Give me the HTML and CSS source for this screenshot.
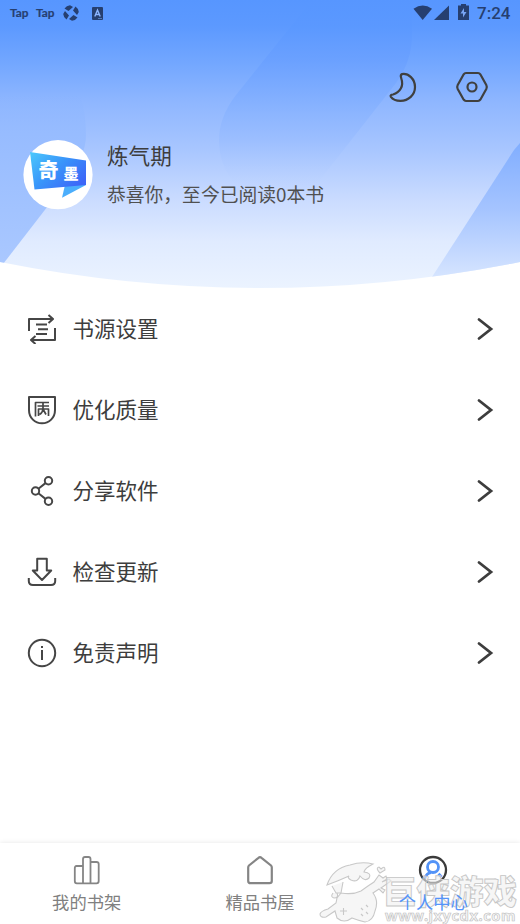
FILE: index.html
```html
<!DOCTYPE html>
<html lang="zh-CN">
<head>
<meta charset="utf-8">
<title>个人中心</title>
<link rel="stylesheet" href="styles.css">
</head>
<body>
<div class="app">
  <header class="hero">
    <svg class="hero-bg" viewBox="0 0 520 290" aria-hidden="true">
      <defs>
        <linearGradient id="sky" gradientUnits="userSpaceOnUse" x1="0" y1="0" x2="0" y2="288">
          <stop offset="0" stop-color="#5796ff"/><stop offset=".09" stop-color="#5c99ff"/><stop offset=".22" stop-color="#73a7ff"/><stop offset=".35" stop-color="#8eb6ff"/><stop offset=".52" stop-color="#a8c6ff"/><stop offset=".7" stop-color="#cbdcff"/><stop offset=".84" stop-color="#e0ebff"/><stop offset="1" stop-color="#ebf3ff"/>
        </linearGradient>
        <linearGradient id="mid" gradientUnits="userSpaceOnUse" x1="0" y1="0" x2="0" y2="185">
          <stop offset="0" stop-color="#5796ff"/><stop offset=".14" stop-color="#5a98ff"/><stop offset=".33" stop-color="#699fff"/><stop offset=".54" stop-color="#80aeff"/><stop offset=".76" stop-color="#9abdff"/><stop offset="1" stop-color="#b8d0ff" stop-opacity="0"/>
        </linearGradient>
        <linearGradient id="left" gradientUnits="userSpaceOnUse" x1="0" y1="90" x2="0" y2="265">
          <stop offset="0" stop-color="#87b2ff" stop-opacity="0"/><stop offset=".25" stop-color="#97bcff"/><stop offset="1" stop-color="#aac8ff"/>
        </linearGradient>
        <linearGradient id="right" gradientUnits="userSpaceOnUse" x1="0" y1="143" x2="0" y2="276">
          <stop offset="0" stop-color="#81aeff"/><stop offset=".5" stop-color="#a5c4ff"/><stop offset="1" stop-color="#d5e4ff"/>
        </linearGradient>
        <clipPath id="bowl"><path d="M0 0H520V262Q260 314 0 262Z"/></clipPath>
      </defs>
      <g clip-path="url(#bowl)">
        <path fill="url(#sky)" d="M0 0H520V290H0Z"/>
        <path fill="url(#mid)" opacity=".75" d="M312 0L236 95Q219 117 219 140Q219 166 236 185H316L396 83Q412 61 412 35V0Z"/>
        <path fill="url(#left)" d="M0 90H78Q86 108 86 135Q86 155 68 180L0 268Z"/>
        <path fill="url(#right)" d="M520 143L514 150L432 277L520 290Z"/>
      </g>
    </svg>
    <div class="status">
      <span class="tap">Tap</span><span class="tap">Tap</span>
      <svg class="spin" width="16" height="16" viewBox="0 0 16 16"><path fill="#263f70" d="M7 .2Q3.500.5 1.500 3.500L5.500 6L10 2ZM15.800 7Q15.500 3.500 12.500 1.500L10 5.500L14 10ZM9 15.800Q12.500 15.500 14.500 12.500L10.500 10L6 14ZM.2 9Q.5 12.500 3.500 14.500L6 10.500L2 6Z"/></svg>
      <svg class="abox" width="11" height="13" viewBox="0 0 11 13"><rect width="11" height="13" rx="1" fill="#263f70"/><path d="M2.800 9.500L5.500 3L8.200 9.500M4 7.500H7" fill="none" stroke="#8bb5ff" stroke-width="1.400"/><path d="M6 11.500H10" stroke="#6694dd" stroke-width=".7"/></svg>
      <svg class="signals" width="60" height="18" viewBox="0 0 60 18" fill="#263f70"><path d="M.5 4.800Q9.700-1.800 19 4.800L9.700 16Z"/><path d="M21 16L36 1.500V16Z"/><path d="M48 0H53V1.600H56V16H45V1.600H48Z"/><path fill="#78a5f5" d="M51 4L47.500 9.500H50V13.500L53.500 8H51Z"/></svg>
      <time class="time">7:24</time>
    </div>
    <div class="tools">
      <svg width="30" height="32" viewBox="0 0 30 32" class="line"><path d="M14 3.100C20.500 2 27 8 27 16C27 24 20.500 29.800 12.500 29.800C8.500 29.800 4.500 28 2.900 25.800C2 24.400 3 23.700 5 23.500C12 21.500 16 15 13.300 7.500C12.600 5.500 12.400 3.700 14 3.100Z"/></svg>
      <svg width="34" height="32" viewBox="0 0 34 32" class="line"><path d="M11 2H23Q24.500 2 25.300 3.300L31.300 14Q32.300 16 31.300 18L25.300 28.700Q24.500 30 23 30H11Q9.500 30 8.700 28.700L2.700 18Q1.700 16 2.700 14L8.700 3.300Q9.500 2 11 2Z"/><circle cx="17" cy="16" r="4.500"/></svg>
    </div>
    <div class="profile">
      <svg class="avatar" width="70" height="70" viewBox="0 0 70 70">
        <defs><linearGradient id="logo" x1="0" y1="0" x2="1" y2=".7"><stop stop-color="#4cc9fc"/><stop offset=".5" stop-color="#3996fa"/><stop offset="1" stop-color="#3d67f8"/></linearGradient></defs>
        <circle cx="35" cy="34.700" r="34.600" fill="#fff"/>
        <path fill="#4baefc" d="M42 45L39 57.700L63 45Z"/><path fill="url(#logo)" d="M7 12L63 20.500V45L11.500 49.500Z"/>
        <text x="15.500" y="38" class="logo-big">奇</text><text x="40.500" y="38.500" class="logo-small">墨</text>
      </svg>
      <div class="who"><div class="rank">炼气期</div><div class="count">恭喜你，至今已阅读0本书</div></div>
    </div>
  </header>

  <main class="menu">
    <a class="row"><svg class="icon" viewBox="0 0 30 30"><path d="M2 17V5H25M21.500 1L26 5L21.500 9M28 14V26H5M8.500 22L4 26L8.500 30M9 10.500H20M11 15.200H21M9 20H20" /></svg><span>书源设置</span><svg class="chev" viewBox="0 0 18 24"><path d="M3 2.500L15 12L3 21.500"/></svg></a>
    <a class="row"><svg class="icon" viewBox="0 0 30 30"><path d="M2 2H28V15C28 23 22 28.300 15 28.300S2 23 2 15Z"/><path class="fine" d="M8.500 21.500V7.500H22M10.500 11H22M11.500 21V14H21.500V21M16 8V14Q15.500 18 12.500 19.500M16.500 15L19 19.500"/></svg><span>优化质量</span><svg class="chev" viewBox="0 0 18 24"><path d="M3 2.500L15 12L3 21.500"/></svg></a>
    <a class="row"><svg class="icon" viewBox="0 0 30 30"><circle cx="8.500" cy="15" r="3.700"/><circle cx="21.500" cy="4.800" r="3.700"/><circle cx="21.500" cy="25.200" r="3.700"/><path d="M11.400 12.700L18.500 7.100M11.400 17.300L18.500 22.900"/></svg><span>分享软件</span><svg class="chev" viewBox="0 0 18 24"><path d="M3 2.500L15 12L3 21.500"/></svg></a>
    <a class="row"><svg class="icon" viewBox="0 0 30 30"><path d="M10.200 1.800H19.800V13.500H24.200L15 23L5.800 13.500H10.200ZM1.800 21V24Q1.800 28 6 28H24Q28.200 28 28.200 24V21"/></svg><span>检查更新</span><svg class="chev" viewBox="0 0 18 24"><path d="M3 2.500L15 12L3 21.500"/></svg></a>
    <a class="row"><svg class="icon" viewBox="0 0 30 30"><circle cx="15" cy="15" r="13.200"/><path d="M15 12V22M15 8V10"/></svg><span>免责声明</span><svg class="chev" viewBox="0 0 18 24"><path d="M3 2.500L15 12L3 21.500"/></svg></a>
  </main>

  <nav class="tabs">
    <a class="tab"><svg viewBox="0 0 30 30"><path d="M11 28.300V4Q11 2 13 2H16.500Q18.500 2 18.500 4V28.300M11 11H4.500Q2.800 11 2.800 13V26Q2.800 28.300 4.800 28.300H24.500Q26.700 28.300 26.700 26V9Q26.700 7 24.500 7H18.500"/></svg><span>我的书架</span></a>
    <a class="tab"><svg viewBox="0 0 30 30"><path class="bold" d="M15 2.200Q15.800 2.200 16.500 2.800L26 10.500Q26.800 11.300 26.800 12.500V26Q26.800 28.200 24.500 28.200H5.500Q3.200 28.200 3.200 26V12.500Q3.200 11.300 4 10.500L13.500 2.800Q14.200 2.200 15 2.200Z"/></svg><span>精品书屋</span></a>
    <a class="tab active"><svg viewBox="0 0 30 30"><g class="person"><circle cx="15" cy="12" r="5.500"/><path d="M6.500 24Q8.500 17.800 13 17.600M20.500 18.800L23.500 22"/></g><circle class="ring" cx="15" cy="15" r="13"/></svg><span>个人中心</span></a>
  </nav>

  <div class="watermark">
    <svg width="74" height="64" viewBox="0 0 74 64"><path d="M8 25C12 13 21 7 31 5Q43 1 54 4Q46 8 45 12Q53 13 50 18Q46 22 41 16Q39 23 32 20Q28 18 30 16Q19 21 8 25ZM13 26L17 33H22L24 22M14 33Q11 37 15 38Q20 38 18 33M22 33Q34 35 42 31L49 26L55 22L60 15L64 18L67 16L68 19L63 22L70 19L72 21L62 28L66 30L64 33L60 29L54 33Q60 41 56 51Q54 61 46 62Q38 60 33 58Q25 64 18 58L16 51L7 57Q1 58 1 54Q2 51 9 49L17 43L18 38Z"/><path d="M21 51H28M24.500 48V55M42 48L44 50M47 45L49 47M47 52L49 54M42 54L44 56M61 13Q56 8 60 7L62 9Q66 5 66 10Z"/></svg>
    <div class="mark-text"><div class="mark-name">巨侠游戏</div><div class="mark-url">www.jxycdx.com</div></div>
  </div>
</div>
</body>
</html>
```
FILE: styles.css
```css
* { box-sizing: border-box; }
body { margin: 0; background: #fff; color: #3d3d3d; font-family: "Noto Sans CJK SC", sans-serif; }
.app { position: relative; width: 520px; height: 924px; display: flex; flex-direction: column; overflow: hidden; background: #fff; }
.hero { position: relative; height: 289px; flex: none; }
.hero-bg { position: absolute; left: 0; top: 0; width: 520px; height: 290px; }
.hero > div { position: relative; }
.status { height: 26px; padding: 0 9px 0 10px; display: flex; align-items: center; color: #263f70; }
.tap { width: 26px; font: 700 11.800px/24px Lato, sans-serif; -webkit-text-stroke: .2px; }
.spin { margin-left: 1px; }
.abox { margin-left: 13px; }
.signals { margin-left: auto; margin-right: 4px; margin-top: -1px; }
.time { width: 34px; font: 500 17px/26px Roboto, sans-serif; }
.tools { display: flex; justify-content: flex-end; gap: 37px; padding: 45px 31px 0 0; height: 77px; }
.line { fill: none; stroke: #40403f; stroke-width: 2.2; stroke-linejoin: round; }
.profile { display: flex; gap: 14px; padding: 37px 0 0 23px; }
.avatar { flex: none; margin-bottom: -1px; }
.logo-big { font: 900 20px "Noto Sans CJK SC", sans-serif; fill: #fff; }
.logo-small { font: 900 15px "Noto Sans CJK SC", sans-serif; fill: #fff; }
.rank { font-size: 21.600px; line-height: 30px; }
.count { margin-top: 11px; font-size: 18.800px; line-height: 26px; color: #505050; white-space: nowrap; }
.menu { flex: 1; }
.row { height: 81px; padding: 0 26px 0 27px; display: flex; align-items: center; font-size: 21.500px; line-height: 32px; }
.row span { padding-bottom: 4px; }
.icon { width: 30px; height: 30px; margin: 0 15.500px 2px 0; fill: none; stroke: #464646; stroke-width: 2; stroke-linejoin: round; }
.icon .fine { stroke-width: 1.700; }
.chev { width: 18px; height: 24px; margin: 0 0 2px auto; fill: none; stroke: #3d3d3d; stroke-width: 2.800; stroke-linecap: round; }
.tabs { height: 81px; flex: none; display: grid; grid-template-columns: repeat(3, 1fr); background: #fff; box-shadow: 0 0 5px rgba(0, 0, 0, .1); }
.tab { display: flex; flex-direction: column; align-items: center; padding-top: 12px; color: #808080; font-size: 17.300px; line-height: 26px; }
.tab svg { width: 30px; height: 30px; margin-bottom: 4px; fill: none; stroke: #858585; stroke-width: 1.800; }
.tab svg .bold { stroke-width: 2.200; }
.tab svg .person { stroke: #5393f7; stroke-width: 2.800; }
.tab svg .ring { stroke: #3b3b3b; stroke-width: 2.300; }
.tab.active { color: #5594fa; }
.tab.active span { position: relative; z-index: 2; }
.watermark { position: absolute; z-index: 1; left: 319px; top: 860px; display: flex; pointer-events: none; }
.watermark svg { fill: rgba(242, 242, 242, .7); stroke: #c8c8c8; stroke-width: 1.100; flex: none; }
.mark-text { margin-left: -10px; padding-top: 13px; white-space: nowrap; color: rgba(240, 240, 240, .6); -webkit-text-stroke: .9px #c6c6c6; }
.mark-name { font: 900 33.500px/34px "Noto Sans CJK SC", sans-serif; }
.mark-url { margin-left: 2px; font: 700 14.800px/16px "Noto Sans", sans-serif; letter-spacing: .5px; -webkit-text-stroke: .6px #bcbcbc; }
```
